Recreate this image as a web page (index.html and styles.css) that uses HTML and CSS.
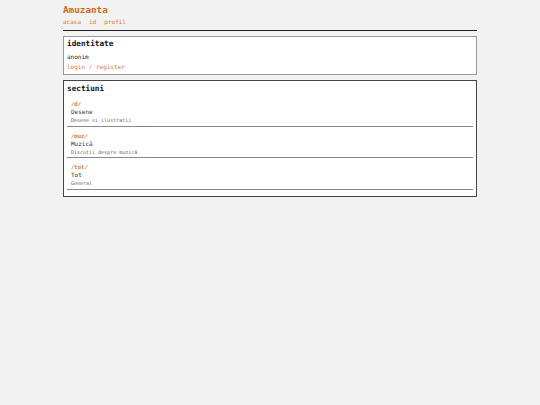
FILE: index.html
```html
<!DOCTYPE html>
<html lang="ro">
<head>
  <meta charset="UTF-8" />
  <meta name="viewport" content="width=device-width, initial-scale=1.0" />
  <title>Amuzanta</title>
  <link rel="stylesheet" href="styles.css">
</head>
<body>

  <div class="page">
    <header class="top">
      <a class="logo" href="#">Amuzanta</a>
      <nav class="nav">
        <a href="#">acasa</a>
        <a href="#">id</a>
        <a href="#">profil</a>
      </nav>
    </header>

    <section class="box">
      <h2>identitate</h2>
      <p class="who">anonim</p>
      <p class="auth"><a href="#">login</a> / <a href="#">register</a></p>
    </section>

    <section class="box boards">
      <h2>sectiuni</h2>
      <ul class="board-list">
        <li class="board">
          <a class="board-path" href="#">/d/</a>
          <div class="board-name">Desene</div>
          <div class="board-desc">Desene si ilustratii</div>
        </li>
        <li class="board">
          <a class="board-path" href="#">/muz/</a>
          <div class="board-name">Muzică</div>
          <div class="board-desc">Discuții despre muzică</div>
        </li>
        <li class="board">
          <a class="board-path" href="#">/tot/</a>
          <div class="board-name">Tot</div>
          <div class="board-desc">General</div>
        </li>
      </ul>
    </section>
  </div>

</body>
</html>
```

FILE: styles.css
```css
:root {
  --bg: #f2f2f2;
  --text: #222;
  --muted: #666;
  --accent: #d47a35;
}

body {
  margin: 0;
  background: var(--bg);
  color: var(--text);
  font-family: 'DejaVu Sans Mono', 'Liberation Mono', monospace;
  font-size: 6px;
}

a {
  color: var(--accent);
  text-decoration: none;
}

.page {
  width: 414px;
  margin: 0 auto;
  padding-top: 4px;
}

.top {
  border-bottom: 1.5px solid #222;
  padding-bottom: 4px;
}

.logo {
  display: block;
  font-size: 9.3px;
  font-weight: bold;
  line-height: 11px;
  color: #d2691e;
}

.nav {
  display: flex;
  gap: 8px;
  margin-top: 3px;
  line-height: 8px;
}

.box {
  background: #fff;
  border: 1px solid #999;
  margin-top: 5px;
  padding: 3px 3px 4px;
}

.box h2 {
  margin: 0;
  font-size: 7.7px;
  line-height: 8px;
  color: #111;
}

.who {
  margin: 5px 0 0;
  line-height: 7px;
}

.auth {
  margin: 3px 0 0;
  line-height: 7px;
  color: var(--accent);
}

.boards {
  border: 1.5px solid #444;
  padding-bottom: 6px;
}

.boards h2 {
  line-height: 9px;
}

.board-list {
  list-style: none;
  margin: 2px 0 0;
  padding: 0;
}

.board {
  padding: 5px 4px 1.5px;
  border-bottom: 1px solid #888;
}

.board-path {
  display: block;
  font-size: 5.6px;
  font-weight: bold;
  line-height: 8px;
}

.board-name {
  line-height: 8px;
  color: #333;
}

.board-desc {
  font-size: 5px;
  color: var(--muted);
  line-height: 8px;
}
```
